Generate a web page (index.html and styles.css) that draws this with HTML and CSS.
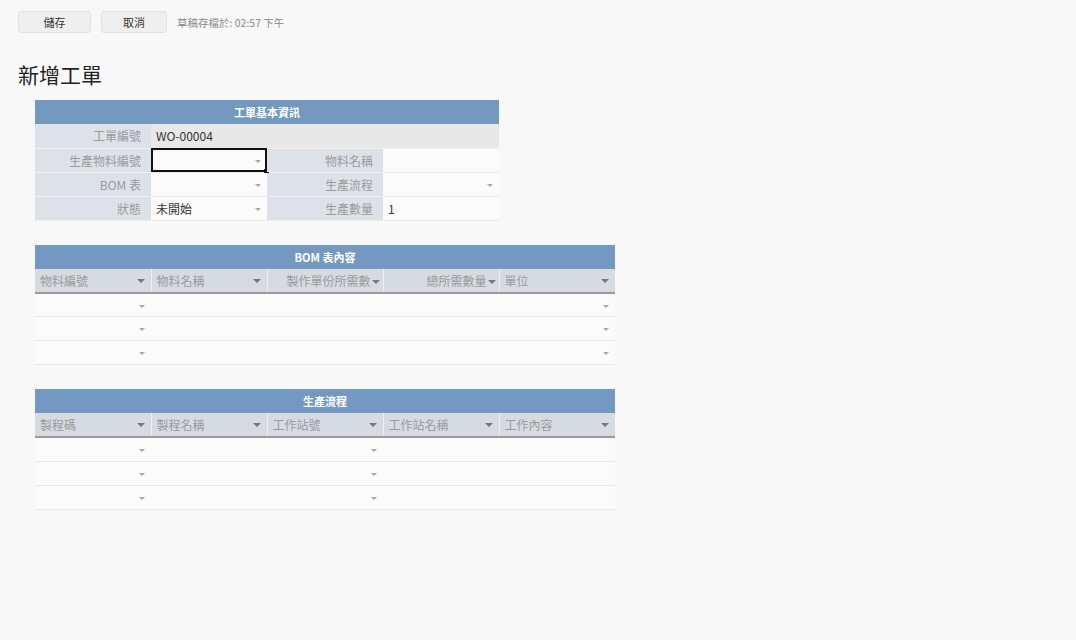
FILE: index.html
```html
<!DOCTYPE html>
<html>
<head>
  <meta charset="UTF-8">
  <title>新增工單</title>
  <link rel="stylesheet" href="styles.css">
</head>
<body>
  <div class="toolbar">
    <button class="btn">儲存</button>
    <button class="btn">取消</button>
    <span class="saved">草稿存檔於: 02:57 下午</span>
  </div>

  <h1>新增工單</h1>

  <div class="sheet">
    <table class="grid info">
      <tr><th colspan="4" class="title">工單基本資訊</th></tr>
      <tr>
        <td class="label">工單編號</td>
        <td colspan="3" class="readonly">WO-00004</td>
      </tr>
      <tr>
        <td class="label">生產物料編號</td>
        <td class="value select selected"><span class="caret"></span><span class="handle"></span></td>
        <td class="label">物料名稱</td>
        <td class="value"></td>
      </tr>
      <tr>
        <td class="label">BOM 表</td>
        <td class="value select"><span class="caret"></span></td>
        <td class="label">生產流程</td>
        <td class="value select"><span class="caret"></span></td>
      </tr>
      <tr>
        <td class="label">狀態</td>
        <td class="value select">未開始<span class="caret"></span></td>
        <td class="label">生產數量</td>
        <td class="value">1</td>
      </tr>
    </table>

    <table class="grid list">
      <tr><th colspan="5" class="title">BOM 表內容</th></tr>
      <tr class="head">
        <td class="select">物料編號<span class="caret dark"></span></td>
        <td class="select">物料名稱<span class="caret dark"></span></td>
        <td class="right">製作單份所需數<span class="caret dark inline"></span></td>
        <td class="right">總所需數量<span class="caret dark inline"></span></td>
        <td class="select">單位<span class="caret dark"></span></td>
      </tr>
      <tr><td class="select"><span class="caret"></span></td><td></td><td></td><td></td><td class="select"><span class="caret"></span></td></tr>
      <tr><td class="select"><span class="caret"></span></td><td></td><td></td><td></td><td class="select"><span class="caret"></span></td></tr>
      <tr><td class="select"><span class="caret"></span></td><td></td><td></td><td></td><td class="select"><span class="caret"></span></td></tr>
    </table>

    <table class="grid list">
      <tr><th colspan="5" class="title">生產流程</th></tr>
      <tr class="head">
        <td class="select">製程碼<span class="caret dark"></span></td>
        <td class="select">製程名稱<span class="caret dark"></span></td>
        <td class="select">工作站號<span class="caret dark"></span></td>
        <td class="select">工作站名稱<span class="caret dark"></span></td>
        <td class="select">工作內容<span class="caret dark"></span></td>
      </tr>
      <tr><td class="select"><span class="caret"></span></td><td></td><td class="select"><span class="caret"></span></td><td></td><td></td></tr>
      <tr><td class="select"><span class="caret"></span></td><td></td><td class="select"><span class="caret"></span></td><td></td><td></td></tr>
      <tr><td class="select"><span class="caret"></span></td><td></td><td class="select"><span class="caret"></span></td><td></td><td></td></tr>
    </table>
  </div>
</body>
</html>
```

FILE: styles.css
```css
:root {
  --blue: #7499c1;
  --label-bg: #dde2e9;
  --head-bg: #d6dbe2;
  --gray: #9a9a9a;
  --line: #e8e8e8;
}

body {
  font-family: "Noto Sans CJK TC", "Noto Sans", sans-serif;
  margin: 0;
  padding: 0;
  background-color: #f8f8f8;
  color: #333;
  font-size: 12px;
}

.toolbar {
  display: flex;
  align-items: center;
  gap: 10px;
  padding: 11px 18px 0;
}

.btn {
  width: 73px;
  height: 22px;
  border: 1px solid #e2e2e2;
  border-radius: 3px;
  background-color: #efefef;
  font-family: inherit;
  font-size: 11px;
  color: #333;
  padding: 0;
}

.btn + .btn {
  width: 66px;
}

.saved {
  color: #888;
  font-size: 10.5px;
  margin-left: 0;
  padding-top: 1px;
}

h1 {
  font-size: 21px;
  font-weight: normal;
  margin: 28px 0 0 18px;
  line-height: 26px;
  color: #222;
}

.sheet {
  padding: 13px 0 0 35px;
}

.grid {
  border-collapse: collapse;
  table-layout: fixed;
  margin-bottom: 24px;
}

.grid td, .grid th {
  width: 116px;
  height: 24px;
  padding: 0 5px;
  box-sizing: border-box;
  border-bottom: 1px solid var(--line);
  position: relative;
  white-space: nowrap;
  overflow: visible;
}

.grid .title {
  background-color: var(--blue);
  color: #fff;
  font-weight: bold;
  text-align: center;
  font-size: 11px;
  height: 24px;
  border-bottom: none;
}

.info td.label {
  background-color: var(--label-bg);
  color: var(--gray);
  text-align: right;
  border-bottom: 1px solid #eef0f3;
  padding-right: 10px;
}

.info td.readonly {
  background-color: #e8e8e8;
  border-bottom: 1px solid #f2f2f2;
}

.info td.value {
  background-color: #fbfbfb;
}

.info td.selected {
  outline: 2px solid #111;
  outline-offset: -2px;
}

.handle {
  position: absolute;
  right: -2px;
  bottom: -2px;
  width: 5px;
  height: 5px;
  background-color: #111;
}

.caret {
  position: absolute;
  right: 6px;
  top: 11px;
  width: 0;
  height: 0;
  border-left: 3px solid transparent;
  border-right: 3px solid transparent;
  border-top: 3px solid #aaa;
}

.caret.dark {
  border-left-width: 4px;
  border-right-width: 4px;
  border-top: 4px solid #777;
  top: 10px;
}

.caret.inline {
  position: static;
  display: inline-block;
  vertical-align: middle;
  margin-left: 1px;
}

.list tr.head td {
  background-color: var(--head-bg);
  color: var(--gray);
  border-bottom: 2px solid #9b9b9b;
  border-left: 1px solid #eceef1;
}

.list tr.head td:first-child {
  border-left: none;
}

.list tr.head td.right {
  text-align: right;
  padding-right: 3px;
}

.list td {
  background-color: #fbfbfb;
}
```
